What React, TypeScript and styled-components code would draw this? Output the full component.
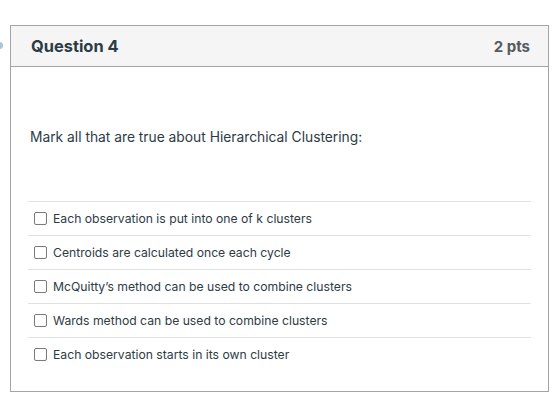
import React from "react";
import styled, { createGlobalStyle } from "styled-components";

const Global = createGlobalStyle`
  html, body { margin: 0; padding: 0; background: #fff; }
  body { font-family: Inter, "Liberation Sans", Arial, sans-serif; color: #2d3b45; }
`;

const Page = styled.div`
  position: relative;
  padding: 25px 10px 0 10px;
  width: 558px;
  box-sizing: border-box;
`;

const Marker = styled.div`
  position: absolute;
  left: -4px;
  top: 42px;
  width: 7px;
  height: 7px;
  border-radius: 50%;
  background: #a9c6dc;
`;

const Card = styled.div`
  width: 539px;
  height: 367px;
  box-sizing: border-box;
  border: 1px solid #a4a4a4;
  display: flex;
  flex-direction: column;
`;

const Header = styled.div`
  height: 41px;
  box-sizing: border-box;
  background: #f5f5f5;
  border-bottom: 1px solid #a4a4a4;
  display: flex;
  align-items: center;
  justify-content: space-between;
  padding: 0 18px 0 20px;
`;

const Title = styled.h2`
  margin: 0;
  font-size: 16.4px;
  font-weight: 700;
  color: #2d3b45;
`;

const Points = styled.span`
  font-size: 15px;
  font-weight: 700;
  color: #555a5e;
`;

const Body = styled.div`
  padding: 61px 17px 0 17px;
`;

const Prompt = styled.p`
  margin: 0 0 0 2px;
  font-size: 13.8px;
  line-height: 18px;
  color: #2d3b45;
`;

const Answers = styled.div`
  margin-top: 55px;
  display: flex;
  flex-direction: column;
`;

const Answer = styled.label`
  height: 34px;
  box-sizing: border-box;
  border-top: 1px solid #dfe1e3;
  display: flex;
  align-items: center;
  gap: 6px;
  padding-left: 6px;
  font-size: 12.2px;
  color: #2d3b45;
`;

const Box = styled.span`
  width: 11px;
  height: 11px;
  border: 1px solid #7a7a7a;
  border-radius: 2px;
  background: #fff;
  flex: none;
`;

const answers = [
  "Each observation is put into one of k clusters",
  "Centroids are calculated once each cycle",
  "McQuitty\u2019s method can be used to combine clusters",
  "Wards method can be used to combine clusters",
  "Each observation starts in its own cluster",
];

export default function App() {
  return (
    <>
      <Global />
      <Page>
        <Marker />
        <Card>
          <Header>
            <Title>Question 4</Title>
            <Points>2 pts</Points>
          </Header>
          <Body>
            <Prompt>Mark all that are true about Hierarchical Clustering:</Prompt>
            <Answers>
              {answers.map((a) => (
                <Answer key={a}>
                  <Box />
                  {a}
                </Answer>
              ))}
            </Answers>
          </Body>
        </Card>
      </Page>
    </>
  );
}
